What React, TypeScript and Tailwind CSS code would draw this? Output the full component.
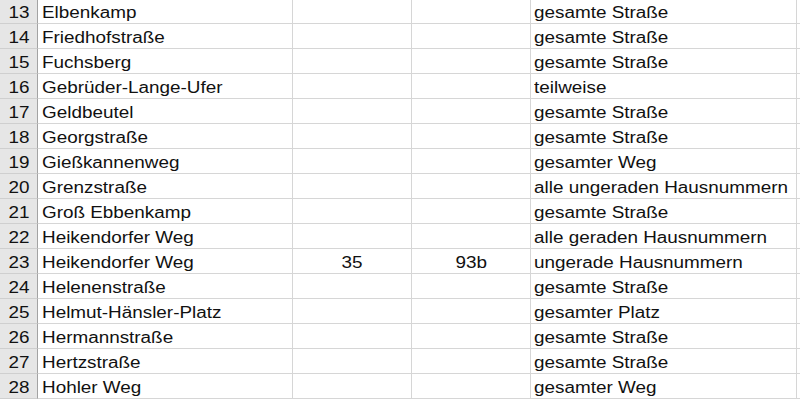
import React from "react";

type Row = { n: number; a: string; b?: string; c?: string; d: string };

const rows: Row[] = [
  { n: 13, a: "Elbenkamp", d: "gesamte Straße" },
  { n: 14, a: "Friedhofstraße", d: "gesamte Straße" },
  { n: 15, a: "Fuchsberg", d: "gesamte Straße" },
  { n: 16, a: "Gebrüder-Lange-Ufer", d: "teilweise" },
  { n: 17, a: "Geldbeutel", d: "gesamte Straße" },
  { n: 18, a: "Georgstraße", d: "gesamte Straße" },
  { n: 19, a: "Gießkannenweg", d: "gesamter Weg" },
  { n: 20, a: "Grenzstraße", d: "alle ungeraden Hausnummern" },
  { n: 21, a: "Groß Ebbenkamp", d: "gesamte Straße" },
  { n: 22, a: "Heikendorfer Weg", d: "alle geraden Hausnummern" },
  { n: 23, a: "Heikendorfer Weg", b: "35", c: "93b", d: "ungerade Hausnummern" },
  { n: 24, a: "Helenenstraße", d: "gesamte Straße" },
  { n: 25, a: "Helmut-Hänsler-Platz", d: "gesamter Platz" },
  { n: 26, a: "Hermannstraße", d: "gesamte Straße" },
  { n: 27, a: "Hertzstraße", d: "gesamte Straße" },
  { n: 28, a: "Hohler Weg", d: "gesamter Weg" },
];

const cell = "h-[25px] border-r border-b border-[#d6d6d6] overflow-visible whitespace-nowrap pt-[4px] leading-[20px]";
const txt = "inline-block scale-x-[1.18] whitespace-nowrap";

export default function App() {
  return (
    <div
      className="w-[800px] h-[400px] overflow-hidden bg-white text-[16px] text-[#111111]"
      style={{ fontFamily: '"Liberation Sans", Arial, sans-serif' }}
    >
      <div className="-mt-px grid grid-cols-[38px_255px_119px_119px_266px_1fr]">
        {rows.map((r) => (
          <React.Fragment key={r.n}>
            <div className="h-[25px] border-r border-r-[#a3a3a3] border-b border-b-[#cfcfcf] bg-[#e6e6e6] pt-[4px] leading-[20px] text-center">
              <span className={`${txt} origin-center`}>{r.n}</span>
            </div>
            <div className={`${cell} pl-[4px]`}>
              <span className={`${txt} origin-left`}>{r.a}</span>
            </div>
            <div className={`${cell} text-center`}>
              {r.b && <span className={`${txt} origin-center`}>{r.b}</span>}
            </div>
            <div className={`${cell} text-center`}>
              {r.c && <span className={`${txt} origin-center`}>{r.c}</span>}
            </div>
            <div className={`${cell} pl-[3px]`}>
              <span className={`${txt} origin-left`}>{r.d}</span>
            </div>
            <div className="h-[25px] border-b border-[#d6d6d6]" />
          </React.Fragment>
        ))}
      </div>
    </div>
  );
}
